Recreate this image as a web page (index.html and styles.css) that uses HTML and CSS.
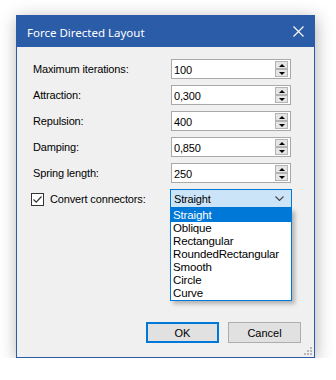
FILE: index.html
```html
<!DOCTYPE html>
<html lang="en">
<head>
    <meta charset="UTF-8">
    <meta name="viewport" content="width=device-width, initial-scale=1.0">
    <title>Force Directed Layout</title>
    <link rel="stylesheet" href="styles.css">
</head>
<body>
    <div class="window">
        <div class="titleBar">
            <span class="titleText">Force Directed Layout</span>
            <svg class="closeIcon" width="11" height="11" viewBox="0 0 11 11">
                <path d="M0.5 0.5 L10.5 10.5 M10.5 0.5 L0.5 10.5" stroke="#fff" stroke-width="1.1" fill="none"/>
            </svg>
        </div>

        <div class="content">
            <div class="form">
                <label class="fieldLabel">Maximum iterations:</label>
                <div class="spinBox"><span class="spinValue">100</span><span class="spinBtns"><span class="spinBtn"><i class="arrowUp"></i></span><span class="spinBtn"><i class="arrowDown"></i></span></span></div>

                <label class="fieldLabel">Attraction:</label>
                <div class="spinBox"><span class="spinValue">0,300</span><span class="spinBtns"><span class="spinBtn"><i class="arrowUp"></i></span><span class="spinBtn"><i class="arrowDown"></i></span></span></div>

                <label class="fieldLabel">Repulsion:</label>
                <div class="spinBox"><span class="spinValue">400</span><span class="spinBtns"><span class="spinBtn"><i class="arrowUp"></i></span><span class="spinBtn"><i class="arrowDown"></i></span></span></div>

                <label class="fieldLabel">Damping:</label>
                <div class="spinBox"><span class="spinValue">0,850</span><span class="spinBtns"><span class="spinBtn"><i class="arrowUp"></i></span><span class="spinBtn"><i class="arrowDown"></i></span></span></div>

                <label class="fieldLabel">Spring length:</label>
                <div class="spinBox"><span class="spinValue">250</span><span class="spinBtns"><span class="spinBtn"><i class="arrowUp"></i></span><span class="spinBtn"><i class="arrowDown"></i></span></span></div>

                <label class="checkLabel">
                    <span class="checkBox">
                        <svg width="11" height="11" viewBox="0 0 11 11"><path d="M1.5 5.5 L4.2 8.2 L9.5 2.5" stroke="#333" stroke-width="1.2" fill="none"/></svg>
                    </span>
                    Convert connectors:
                </label>
                <div class="comboWrap">
                    <div class="combo">
                        <span>Straight</span>
                        <svg width="9" height="5" viewBox="0 0 9 5"><path d="M0.5 0.5 L4.5 4.5 L8.5 0.5" stroke="#444" stroke-width="1.1" fill="none"/></svg>
                    </div>
                    <ul class="dropList">
                        <li class="selected">Straight</li>
                        <li>Oblique</li>
                        <li>Rectangular</li>
                        <li>RoundedRectangular</li>
                        <li>Smooth</li>
                        <li>Circle</li>
                        <li>Curve</li>
                    </ul>
                </div>
            </div>

            <div class="buttonRow">
                <button class="btn btnDefault">OK</button>
                <button class="btn">Cancel</button>
            </div>

            <div class="sizeGrip">
                <i></i><i></i><i></i><i></i><i></i><i></i>
            </div>
        </div>
    </div>
</body>
</html>
```

FILE: styles.css
```css
body {
    margin: 0;
    padding: 15px 0 0 16px;
    background: #fff;
    font-family: "Liberation Sans", Arial, sans-serif;
    font-size: 11px;
    letter-spacing: -0.15px;
    color: #000;
}

.window {
    width: 299px;
    height: 343px;
    box-sizing: border-box;
    border: 1px solid #2b5ca8;
    display: flex;
    flex-direction: column;
    box-shadow: 1px 3px 16px rgba(0, 0, 0, 0.3);
}

.titleBar {
    height: 31px;
    flex: none;
    background-color: #2b5ca8;
    color: #fff;
    display: flex;
    align-items: center;
    justify-content: space-between;
    padding: 0 10px 0 10px;
}

.titleText {
    font-family: "Noto Sans", "Open Sans", sans-serif;
    font-size: 11.5px;
    letter-spacing: 0;
    padding-top: 1px;
}

.content {
    flex: 1;
    position: relative;
    background-color: #f0f0f0;
    display: flex;
    flex-direction: column;
    padding: 12px 13px 14px 16px;
}

.form {
    display: grid;
    grid-template-columns: 137px 122px;
    grid-auto-rows: 20px;
    row-gap: 6px;
}

.fieldLabel {
    display: flex;
    align-items: center;
}

.spinBox {
    margin-left: 1px;
    width: 120px;
    box-sizing: border-box;
    border: 1px solid #a9a9a9;
    background: #fff;
    display: flex;
    align-items: center;
    justify-content: space-between;
    padding: 1px 2px 1px 2px;
}

.spinValue {
    padding-top: 1px;
}

.spinBtns {
    display: flex;
    flex-direction: column;
}

.spinBtn {
    width: 13px;
    height: 8px;
    box-sizing: border-box;
    background: #e5e5e5;
    border: 1px solid #b4b4b4;
    display: flex;
    align-items: center;
    justify-content: center;
}

.arrowUp {
    width: 0;
    height: 0;
    border-left: 3px solid transparent;
    border-right: 3px solid transparent;
    border-bottom: 3px solid #000;
}

.arrowDown {
    width: 0;
    height: 0;
    border-left: 3px solid transparent;
    border-right: 3px solid transparent;
    border-top: 3px solid #000;
}

.checkLabel {
    display: flex;
    align-items: center;
    gap: 6px;
    margin-left: -2px;
}

.checkBox {
    width: 13px;
    height: 13px;
    box-sizing: border-box;
    border: 1px solid #333;
    background: #fff;
    display: flex;
    align-items: center;
    justify-content: center;
}

.comboWrap {
    position: relative;
}

.combo {
    height: 19px;
    box-sizing: border-box;
    border: 1px solid #0078d7;
    background: #cce4f7;
    display: flex;
    align-items: center;
    justify-content: space-between;
    padding: 0 7px 0 3px;
}

.dropList {
    position: absolute;
    left: 0;
    top: 19px;
    width: 122px;
    box-sizing: border-box;
    margin: 0;
    padding: 0;
    list-style: none;
    background: #fff;
    border: 1px solid #0078d7;
    box-shadow: 3px 3px 4px rgba(0, 0, 0, 0.25);
    z-index: 2;
}

.dropList li {
    height: 13px;
    line-height: 13px;
    padding-left: 2px;
    font-size: 11.5px;
}

.dropList .selected {
    background-color: #0078d7;
    color: #fff;
}

.buttonRow {
    margin-top: auto;
    display: flex;
    justify-content: flex-end;
    gap: 9px;
}

.btn {
    width: 73px;
    height: 21px;
    box-sizing: border-box;
    font-family: "Liberation Sans", Arial, sans-serif;
    font-size: 11px;
    color: #000;
    background: #e1e1e1;
    border: 1px solid #adadad;
    padding: 0;
}

.btnDefault {
    border: 2px solid #0078d7;
}

.sizeGrip {
    position: absolute;
    right: 2px;
    bottom: 2px;
    width: 8px;
    height: 8px;
    display: grid;
    grid-template-columns: repeat(3, 2px);
    grid-template-rows: repeat(3, 2px);
    gap: 1px;
}

.sizeGrip i {
    background: #b8b8b8;
}

.sizeGrip i:nth-child(1) { grid-area: 1 / 3; }
.sizeGrip i:nth-child(2) { grid-area: 2 / 2; }
.sizeGrip i:nth-child(3) { grid-area: 2 / 3; }
.sizeGrip i:nth-child(4) { grid-area: 3 / 1; }
.sizeGrip i:nth-child(5) { grid-area: 3 / 2; }
.sizeGrip i:nth-child(6) { grid-area: 3 / 3; }
```
